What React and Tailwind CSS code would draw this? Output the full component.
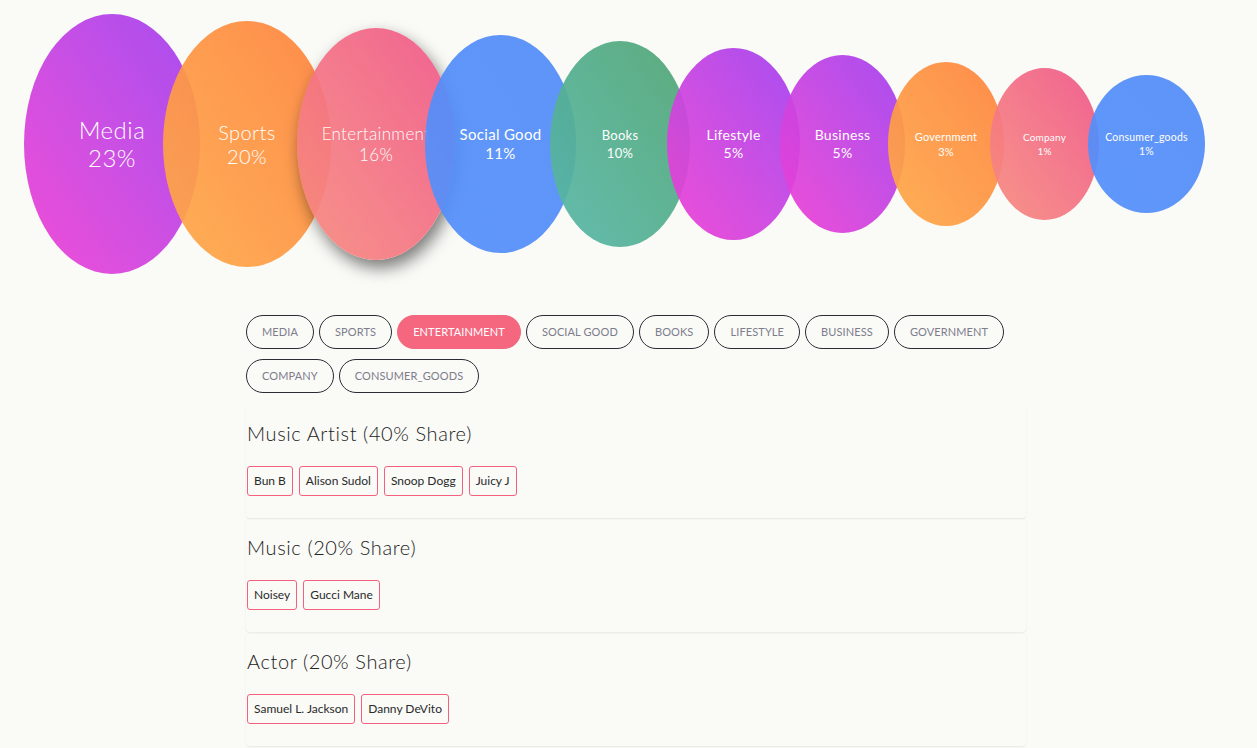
import React, { useState } from 'react';

const bubbles = [
  { key: 'media', label: 'Media', pct: '23%', w: 'w-[176px]', h: 'h-[260px]', ml: 'ml-0', text: 'text-[24px] leading-[28px] font-light', color: 'from-[#f03fd4] to-[#a13ef0]' },
  { key: 'sports', label: 'Sports', pct: '20%', w: 'w-[168px]', h: 'h-[246px]', ml: '-ml-[37px]', text: 'text-[20px] leading-[24px] font-light', color: 'from-[#ffaa4a] to-[#ff843f]' },
  { key: 'entertainment', label: 'Entertainment', pct: '16%', w: 'w-[158px]', h: 'h-[232px]', ml: '-ml-[34px]', text: 'text-[17px] leading-[21px] font-light', color: 'from-[#f78c7f] to-[#f0568a]' },
  { key: 'social good', label: 'Social Good', pct: '11%', w: 'w-[151px]', h: 'h-[218px]', ml: '-ml-[30px]', text: 'text-[15px] leading-[19px]', color: 'from-[#5590fb] to-[#538df8]' },
  { key: 'books', label: 'Books', pct: '10%', w: 'w-[140px]', h: 'h-[206px]', ml: '-ml-[26px]', text: 'text-[13px] leading-[18px]', color: 'from-[#58b8a9] to-[#52a674]' },
  { key: 'lifestyle', label: 'Lifestyle', pct: '5%', w: 'w-[133px]', h: 'h-[192px]', ml: '-ml-[23px]', text: 'text-[14px] leading-[18px]', color: 'from-[#f03fd4] to-[#a13ef0]' },
  { key: 'business', label: 'Business', pct: '5%', w: 'w-[125px]', h: 'h-[178px]', ml: '-ml-[20px]', text: 'text-[14px] leading-[18px]', color: 'from-[#f03fd4] to-[#a13ef0]' },
  { key: 'government', label: 'Government', pct: '3%', w: 'w-[116px]', h: 'h-[164px]', ml: '-ml-[17px]', text: 'text-[11px] leading-[15px]', color: 'from-[#ffaa4a] to-[#ff843f]' },
  { key: 'company', label: 'Company', pct: '1%', w: 'w-[109px]', h: 'h-[152px]', ml: '-ml-[14px]', text: 'text-[10px] leading-[14px]', color: 'from-[#f78c7f] to-[#f0568a]' },
  { key: 'consumer_goods', label: 'Consumer_goods', pct: '1%', w: 'w-[117px]', h: 'h-[138px]', ml: '-ml-[11px]', text: 'text-[10.5px] leading-[14px]', color: 'from-[#5590fb] to-[#538df8]' },
];

const groups = [
  { title: 'Music Artist (40% Share)', people: ['Bun B', 'Alison Sudol', 'Snoop Dogg', 'Juicy J'] },
  { title: 'Music (20% Share)', people: ['Noisey', 'Gucci Mane'] },
  { title: 'Actor (20% Share)', people: ['Samuel L. Jackson', 'Danny DeVito'] },
];

const App = () => {
  const [active, setActive] = useState('entertainment');

  return (
    <div className="min-h-screen bg-[#fafaf7] font-['Lato','Open_Sans',sans-serif] text-[#333]">
      {/* bubble chart */}
      <div className="flex items-center h-[288px] pl-[24px]">
        {bubbles.map(b => (
          <div
            key={b.key}
            onClick={() => setActive(b.key)}
            className={`${b.w} ${b.h} ${b.ml} shrink-0 rounded-[50%] bg-linear-to-tr ${b.color} opacity-[0.93] flex flex-col items-center justify-center text-white whitespace-nowrap tracking-[0.02em] cursor-pointer ${b.text} ${active === b.key ? 'shadow-[4px_8px_16px_rgba(0,0,0,0.55)]' : ''}`}
          >
            <span>{b.label}</span>
            <span>{b.pct}</span>
          </div>
        ))}
      </div>

      <div className="ml-[246px] w-[780px]">
        {/* filter pills */}
        <div className="flex flex-wrap gap-x-[5px] gap-y-[10px] mt-[27px]">
          {bubbles.map(b => (
            <button
              key={b.key}
              onClick={() => setActive(b.key)}
              className={`h-[34px] px-[15px] rounded-full text-[11px] uppercase tracking-[0.01em] ${active === b.key ? 'bg-[#f5677f] text-white border border-[#f5677f]' : 'border border-[#2b2b36] text-[#7d7d8c]'}`}
            >
              {b.key}
            </button>
          ))}
        </div>

        {/* share groups */}
        <div className="mt-[11px]">
          {groups.map(g => (
            <div key={g.title} className="h-[114px] pt-[17px] px-[1px] rounded-[4px] shadow-[0_1px_2px_rgba(0,0,0,0.08)]">
              <h3 className="text-[20px] leading-[24px] font-light tracking-[0.03em] text-[#222]">{g.title}</h3>
              <div className="flex gap-[6px] mt-[21px]">
                {g.people.map(p => (
                  <span key={p} className="h-[30px] px-[6px] flex items-center border border-[#f5607e] rounded-[3px] text-[12px] text-[#2a2a2a]">
                    {p}
                  </span>
                ))}
              </div>
            </div>
          ))}
        </div>
      </div>
    </div>
  );
};

export default App;
